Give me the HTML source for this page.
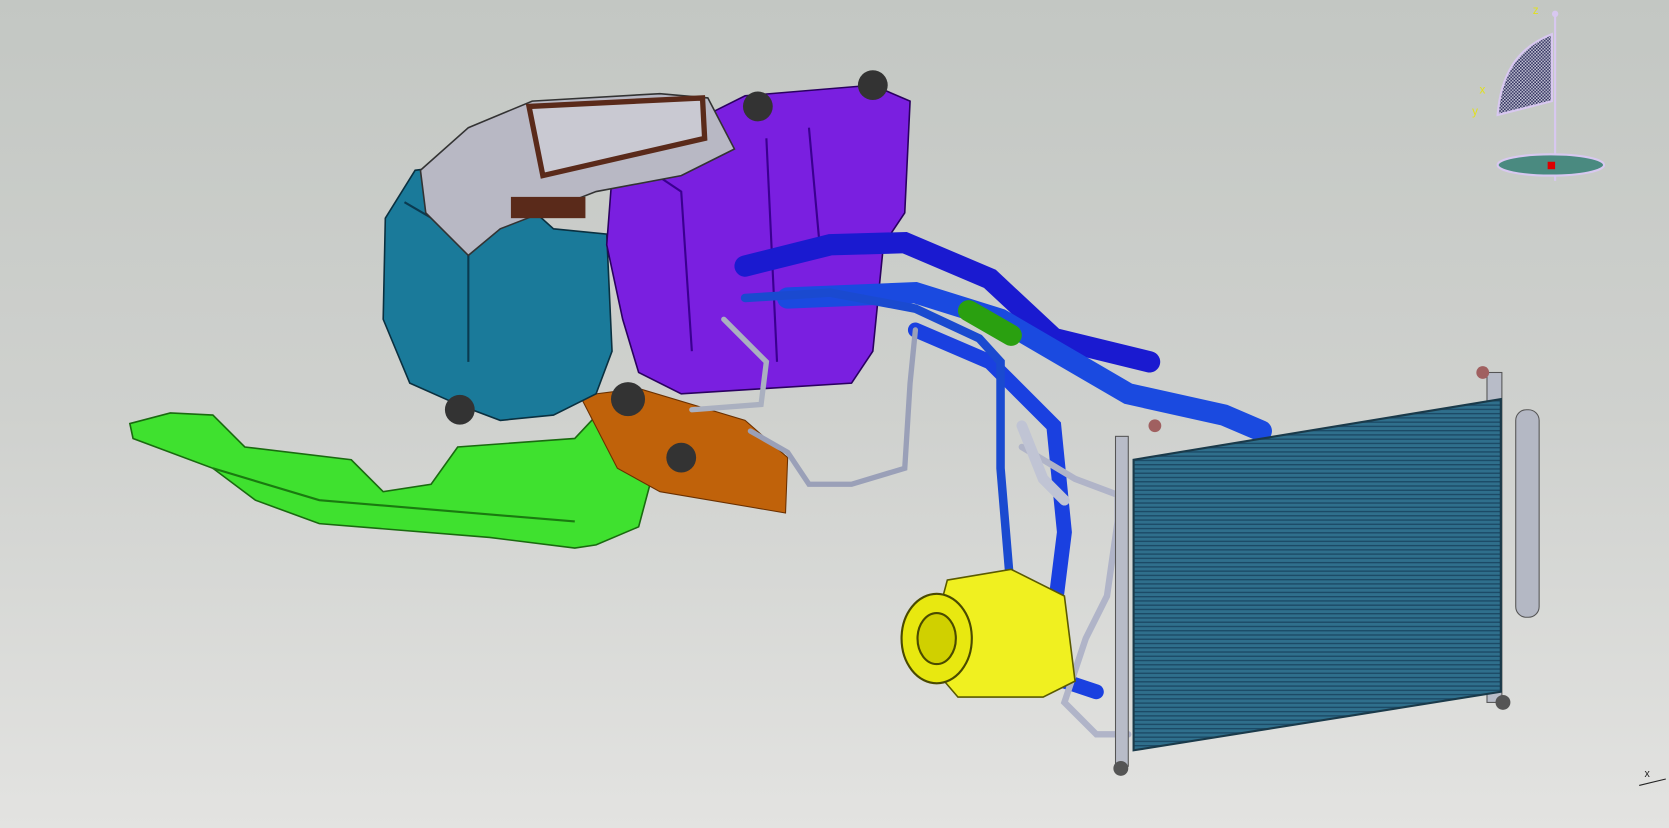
<!DOCTYPE html>
<html><head><meta charset="utf-8"><style>
html,body{margin:0;padding:0;width:1669px;height:828px;overflow:hidden;}
body{background:linear-gradient(#c3c7c3 0%,#cfd1ce 50%,#e3e3e1 100%);font-family:"Liberation Sans",sans-serif;}
svg{position:absolute;left:0;top:0}
</style></head><body>
<svg width="1669" height="828" viewBox="0 0 1568 778" preserveAspectRatio="none">
<defs>
<pattern id="fins" width="6" height="4" patternUnits="userSpaceOnUse"><rect width="6" height="4" fill="#2f6f8c"/><rect width="6" height="1.3" fill="#1c4a66"/></pattern>
<pattern id="chk" width="3" height="3" patternUnits="userSpaceOnUse"><rect width="3" height="3" fill="#c8c8d8"/><rect width="1.5" height="1.5" fill="#2a2a5a"/><rect x="1.5" y="1.5" width="1.5" height="1.5" fill="#2a2a5a"/></pattern>
</defs>
<!-- green bracket -->
<path d="M122,398 L160,388 L200,390 L230,420 L330,432 L360,462 L405,455 L430,420 L540,412 L570,380 L600,375 L612,450 L600,495 L560,512 L540,515 L460,505 L300,492 L240,470 L200,440 L125,412 Z" fill="#3fe12f" stroke="#1a6a10" stroke-width="1.5"/>
<path d="M200,440 L300,470 L540,490" fill="none" stroke="#1a7a10" stroke-width="2"/>
<!-- orange plate -->
<path d="M545,372 L600,365 L700,395 L740,430 L738,482 L620,462 L580,440 Z" fill="#c0620a" stroke="#6a3000" stroke-width="1"/>
<!-- teal blower -->
<path d="M362,205 L390,160 L430,155 L470,170 L520,215 L570,220 L575,330 L560,370 L520,390 L470,395 L430,380 L385,360 L360,300 Z" fill="#1a7a9a" stroke="#0a3040" stroke-width="1.5"/>
<path d="M380,190 L440,225 L440,340" fill="none" stroke="#0a3a50" stroke-width="2"/>
<!-- purple heater unit -->
<path d="M575,165 L600,130 L660,110 L700,90 L820,80 L855,95 L850,200 L830,230 L820,330 L800,360 L720,365 L640,370 L600,350 L585,300 L570,230 Z" fill="#7a1fe0" stroke="#2a0060" stroke-width="1.5"/>
<path d="M610,160 L640,180 L650,330 M720,130 L730,340 M760,120 L770,230" fill="none" stroke="#3a0090" stroke-width="2"/>
<!-- gray top duct -->
<path d="M395,160 L440,120 L500,95 L620,88 L665,92 L690,140 L640,165 L560,180 L470,215 L440,240 L400,200 Z" fill="#b8b8c4" stroke="#333" stroke-width="1.5"/>
<path d="M497,100 L660,92 L662,130 L510,165 Z" fill="#c9c9d2" stroke="#5a2a1a" stroke-width="5"/>
<rect x="480" y="185" width="70" height="20" fill="#5a2a1a"/>
<!-- vents -->
<g fill="#333"><circle cx="432" cy="385" r="14"/><circle cx="590" cy="375" r="16"/><circle cx="640" cy="430" r="14"/><circle cx="820" cy="80" r="14"/><circle cx="712" cy="100" r="14"/></g>
<!-- hoses -->
<g fill="none" stroke-linecap="round">
<path d="M700,250 L780,230 L850,228 L930,262 L990,318 L1080,340" stroke="#1a1ad0" stroke-width="20"/>
<path d="M740,280 L860,275 L940,300 L1000,335 L1060,370 L1150,390 L1185,405" stroke="#1a4ae0" stroke-width="20"/>
<path d="M910,292 L950,315" stroke="#2aa010" stroke-width="20"/>
<path d="M860,310 L930,340 L990,400 L1000,500 L990,580 L1000,640 L1030,650" stroke="#1a40e0" stroke-width="14"/>
<path d="M700,280 L780,275 L860,290 L920,318 L940,340 L940,440 L950,560 L970,620 L1000,640" stroke="#1a4ad0" stroke-width="8"/>
<path d="M860,310 L855,360 L850,440 L800,455 L760,455 L740,425 L705,405" stroke="#9aa0b8" stroke-width="5"/>
<path d="M680,300 L720,340 L715,380 L650,385" stroke="#aab0c0" stroke-width="5"/>
<path d="M960,420 L1010,450 L1050,465 L1050,490 L1040,560 L1020,600 L1000,660 L1030,690 L1060,690" stroke="#b0b4c8" stroke-width="6"/>
<path d="M960,400 L980,450 L1000,470" stroke="#c0c4d4" stroke-width="10"/>
</g>
<!-- compressor -->
<path d="M890,545 L950,535 L1000,560 L1010,640 L980,655 L900,655 L870,620 Z" fill="#f0f020" stroke="#5a5a00" stroke-width="1.5"/>
<ellipse cx="880" cy="600" rx="33" ry="42" fill="#e8e810" stroke="#4a4a00" stroke-width="2"/>
<ellipse cx="880" cy="600" rx="18" ry="24" fill="#d0d000" stroke="#4a4a00" stroke-width="2"/>
<!-- condenser -->
<rect x="1048" y="410" width="12" height="310" fill="#b8bcc8" stroke="#555"/>
<rect x="1397" y="350" width="14" height="310" fill="#b8bcc8" stroke="#555"/>
<path d="M1065,432 L1410,375 L1410,650 L1065,705 Z" fill="url(#fins)" stroke="#1a3a4a" stroke-width="2"/>
<rect x="1424" y="385" width="22" height="195" rx="10" fill="#b4b8c4" stroke="#555"/>
<circle cx="1053" cy="722" r="7" fill="#555"/><circle cx="1412" cy="660" r="7" fill="#555"/>
<circle cx="1085" cy="400" r="6" fill="#a06060"/><circle cx="1393" cy="350" r="6" fill="#a06060"/>
<!-- compass -->
<line x1="1461" y1="12" x2="1461" y2="170" stroke="#d8c8f0" stroke-width="2"/>
<circle cx="1461" cy="13" r="3" fill="#d8c8f0"/>
<path d="M1458,32 L1458,95 L1407,108 C1410,70 1425,45 1458,32 Z" fill="url(#chk)" stroke="#d8c8f0" stroke-width="2"/>
<ellipse cx="1457" cy="155" rx="50" ry="10" fill="#4a8a80" stroke="#d8c8f0" stroke-width="2"/>
<rect x="1454" y="152" width="7" height="7" fill="#d00"/>
<text x="1440" y="13" font-size="11" fill="#e0e020">z</text>
<text x="1390" y="88" font-size="11" fill="#e0e020">x</text>
<text x="1383" y="108" font-size="11" fill="#e0e020">y</text>
<text x="1545" y="730" font-size="10" fill="#222">x</text>
<path d="M1540,738 L1565,732" stroke="#222"/>
</svg>
</body></html>
